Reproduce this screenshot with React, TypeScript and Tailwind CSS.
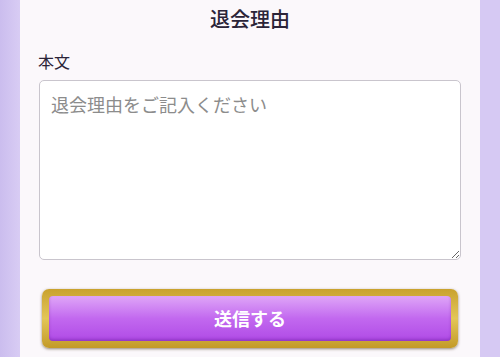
import React from "react";

export default function App() {
  const font = { fontFamily: '"Noto Sans CJK JP", "Noto Sans", sans-serif' };
  return (
    <div className="flex w-[500px] h-[357px] overflow-hidden" style={font}>
      <div className="w-[20px] shrink-0 bg-gradient-to-r from-[#cbbdee] to-[#d8ccf4]" />
      <div className="flex-1 bg-[#fbf8fb] flex flex-col pt-[4px]">
        <h1 className="text-center text-[20px] leading-[30px] font-medium text-[#2b2438]">退会理由</h1>
        <div className="px-[19px] mt-[15px]">
          <label className="block text-[16px] leading-[25px] text-[#2b2438] ml-[-1px]">本文</label>
          <textarea
            placeholder="退会理由をご記入ください"
            className="mt-[6px] block w-[422px] h-[180px] rounded-[5px] border border-[#c9c5cd] bg-white px-[11px] py-[10px] text-[18px] leading-[26px] text-[#333] placeholder:text-[#8c8c8c] outline-none"
          />
        </div>
        <div className="px-[22px] mt-[29px]">
          <button className="block w-[416px] h-[59px] rounded-[7px] p-[7px] bg-gradient-to-b from-[#c9a22e] via-[#e3c657] to-[#c39a26] shadow-[0_1px_3px_rgba(60,40,0,0.55)]">
            <div className="h-full w-full rounded-[4px] bg-gradient-to-b from-[#dfa5f7] via-[#c268ef] to-[#b04ae6] flex items-center justify-center text-white text-[18px] font-bold shadow-[inset_0_-2px_3px_rgba(90,20,140,0.35)]">
              送信する
            </div>
          </button>
        </div>
      </div>
      <div className="w-[20px] shrink-0 bg-[#d6c9f3]" />
    </div>
  );
}
